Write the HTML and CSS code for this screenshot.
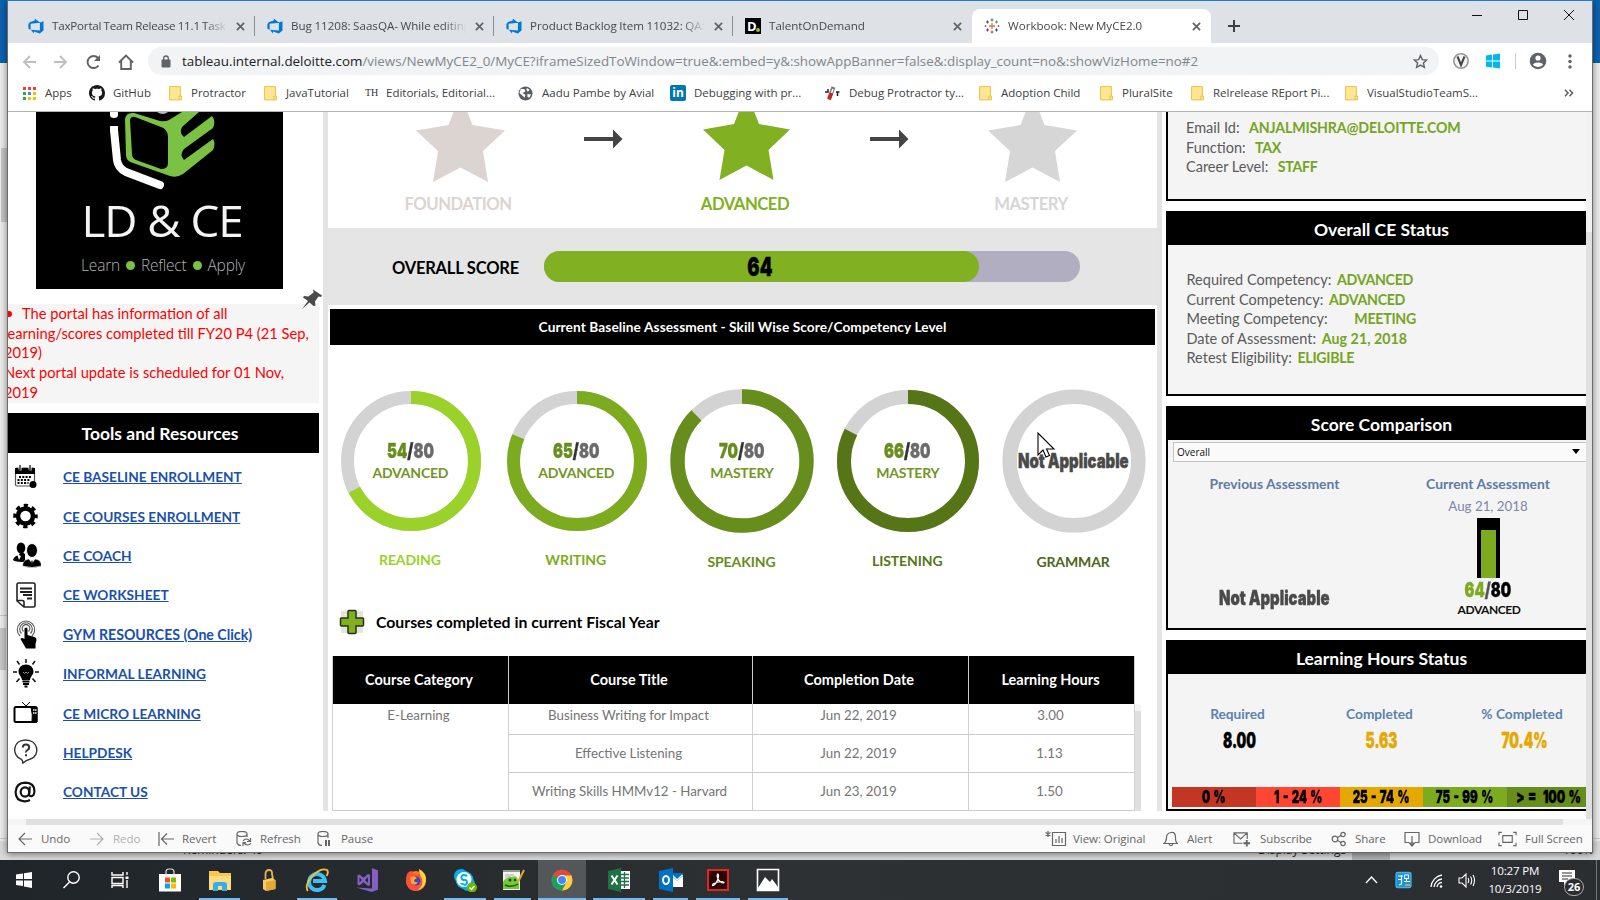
FILE: index.html
```html
<!DOCTYPE html>
<html lang="en">
<head>
<meta charset="utf-8">
<title>Workbook: New MyCE2.0</title>
<link rel="stylesheet" href="styles.css">
</head>
<body>
<svg class="defs" width="0" height="0">
  <defs>
    <symbol id="azure" viewBox="0 0 16 16"><path fill="#0078d7" d="M15.5 3.2v9.4L11.8 15.6 6 13.6v2L2.8 11.8l9.1.7V4.600z M12 4.700 6.800.5v2.100L2 4 .4 6v4.700l2.200 1V5.700z"/></symbol>
    <symbol id="x" viewBox="0 0 10 10"><path d="M1 1l8 8M9 1L1 9" stroke="#5f6368" stroke-width="1.900" fill="none"/></symbol>
    <symbol id="folder" viewBox="0 0 13 15"><path d="M.6.6h10.800v9.500h1v3.800H.6z" fill="#ffe694" stroke="#e9c33f"/><path d="M10 13.900v-3.800h1.400" fill="none" stroke="#e9c33f"/></symbol>
  </defs>
</svg>

<div class="desktop">
  <div class="desk-blue"></div>
  <div class="desk-thumb upper"></div>
  <div class="desk-thumb lower"></div>
  <div class="desk-line short"></div>
  <div class="desk-line long"></div>
  <div class="desk-status"><span class="s1">Reminders: 49</span><span class="s3">Display Settings</span><i></i><span class="s4">100%</span></div>
</div>

<div class="window">
  <div class="tabs">
    <div class="tab"><svg class="fav"><use href="#azure"/></svg><span class="tt">TaxPortal Team Release 11.1 Taskboard</span><svg class="cl"><use href="#x"/></svg></div>
    <div class="tab"><svg class="fav"><use href="#azure"/></svg><span class="tt">Bug 11208: SaasQA- While editing</span><svg class="cl"><use href="#x"/></svg></div>
    <div class="tab"><svg class="fav"><use href="#azure"/></svg><span class="tt">Product Backlog Item 11032: QA: T</span><svg class="cl"><use href="#x"/></svg></div>
    <div class="tab nosep"><span class="fav dlogo">D<i></i></span><span class="tt">TalentOnDemand</span><svg class="cl"><use href="#x"/></svg></div>
    <div class="tab active">
      <svg class="fav" viewBox="0 0 16 16" fill="none"><path d="M8 5v6M5 8h6" stroke="#e8762c" stroke-width="1.300"/><path d="M8 .5v3M6.500 2h3M8 12.500v3M6.500 14h3" stroke="#5b6591"/><path d="M3.500 2.500v3M2 4h3M12.500 10.500v3M11 12h3" stroke="#3a4a7a"/><path d="M12.500 2.500v3M11 4h3M1.500 7v2M.5 8h2M14.500 7v2M13.500 8h2" stroke="#5b879b"/><path d="M3.500 10.500v3M2 12h3" stroke="#c72035"/></svg>
      <span class="tt">Workbook: New MyCE2.0</span><svg class="cl"><use href="#x"/></svg></div>
    <svg class="plus" viewBox="0 0 12 12"><path d="M6 0v12M0 6h12" stroke="#3c4043" stroke-width="2"/></svg>
    <svg class="winbtns" width="104" height="14" viewBox="0 0 104 14" fill="none" stroke="#111"><path d="M0 7.500h10M46.500 2.500h9v9h-9zM92 2l10 10M102 2L92 12"/></svg>
  </div>

  <div class="nav">
    <svg class="navicons" width="122" height="18" viewBox="0 0 122 18" fill="none" stroke-width="1.900">
      <path d="M14 9H2M8 3L2 9l6 6M32 9h12M38 3l6 6-6 6" stroke="#bdbfc1"/>
      <path d="M76.500 12.500A6 6 0 1 1 76 5" stroke="#5f6368"/><path d="M78 2v6h-6z" fill="#5f6368"/>
      <path d="M97 9.500l7-7 7 7M99.200 8v8h9.600V8" stroke="#5f6368"/>
    </svg>
    <div class="omni">
      <svg width="10" height="13" viewBox="0 0 10 13"><rect y="4.500" x=".5" width="9" height="8" rx="1" fill="#5f6368"/><path d="M2.700 5V3.300a2.300 2.300 0 0 1 4.600 0V5" fill="none" stroke="#5f6368" stroke-width="1.300"/></svg>
      <span class="url"><b>tableau.internal.deloitte.com</b>/views/NewMyCE2_0/MyCE?iframeSizedToWindow=true&amp;:embed=y&amp;:showAppBanner=false&amp;:display_count=no&amp;:showVizHome=no#2</span>
      <svg class="star" width="15" height="15" viewBox="0 0 15 15"><path d="M7.500 1.500l1.800 4.100 4.400.4-3.300 3 1 4.400-3.900-2.300-3.900 2.300 1-4.400-3.300-3 4.400-.4z" fill="none" stroke="#5f6368" stroke-width="1.400"/></svg>
    </div>
    <svg class="exts" width="130" height="20" viewBox="0 0 130 20">
      <circle cx="9" cy="10" r="7.200" fill="#f4f4f4" stroke="#999" stroke-width="1.600"/><path d="M5.500 5.500L9 14l3.500-8.500" fill="none" stroke="#444" stroke-width="2"/>
      <path d="M34 4.500l6-.9v6h-6zM41 3.500l7-1v7.100h-7zM34 10.600h6v6l-6-.9zM41 10.600h7v7l-7-1z" fill="#00b7f0"/>
      <path d="M63.500 2v16" stroke="#ccc"/>
      <circle cx="86" cy="10" r="8.300" fill="#5f6368"/><circle cx="86" cy="7" r="2.600" fill="#fff"/><path d="M81 13.800c1-3 9-3 10 0-2 2.800-8 2.800-10 0z" fill="#fff"/>
      <g fill="#5f6368"><circle cx="118" cy="5" r="1.700"/><circle cx="118" cy="10.500" r="1.700"/><circle cx="118" cy="16" r="1.700"/></g>
    </svg>
  </div>

  <div class="marks">
    <div><svg viewBox="0 0 13 13" width="13" height="13"><path fill="#ea4335" d="M0 0h3v3H0zM5 0h3v3H5zM10 0h3v3h-3z"/><path fill="#34a853" d="M0 5h3v3H0zM0 10h3v3H0z"/><path fill="#4285f4" d="M5 5h3v3H5z"/><path fill="#fbbc05" d="M10 5h3v3h-3zM5 10h3v3H5zM10 10h3v3h-3z"/></svg><span>Apps</span></div>
    <div class="gh"><svg viewBox="0 0 16 16" width="16" height="16"><path fill="#15181c" d="M8 0C3.580 0 0 3.580 0 8c0 3.540 2.290 6.530 5.470 7.590.4.070.55-.17.550-.38 0-.19-.01-.82-.01-1.490-2.010.37-2.530-.49-2.690-.94-.09-.23-.48-.94-.82-1.130-.28-.15-.68-.52-.01-.53.630-.01 1.080.58 1.230.82.720 1.210 1.870.87 2.330.66.070-.52.280-.87.510-1.070-1.780-.2-3.640-.89-3.640-3.950 0-.87.310-1.590.82-2.150-.08-.2-.36-1.020.08-2.120 0 0 .67-.21 2.200.82.640-.18 1.320-.27 2-.27s1.360.09 2 .27c1.530-1.040 2.200-.82 2.200-.82.440 1.100.160 1.920.08 2.120.510.560.820 1.270.820 2.150 0 3.070-1.870 3.750-3.650 3.950.290.250.540.730.540 1.480 0 1.070-.01 1.930-.01 2.200 0 .21.150.46.550.38A8 8 0 0 0 16 8c0-4.420-3.580-8-8-8"/></svg><span>GitHub</span></div>
    <div><svg width="13" height="15"><use href="#folder"/></svg><span>Protractor</span></div>
    <div><svg width="13" height="15"><use href="#folder"/></svg><span>JavaTutorial</span></div>
    <div><em>TH</em><span>Editorials, Editorial...</span></div>
    <div><svg viewBox="0 0 16 16" width="15" height="15"><circle cx="8" cy="8" r="7.500" fill="#5a5d61"/><path d="M3 3l4 .5 1 2-3 2 3 2-1 3-3-3-2.500-2zM9.500 2l3 2-2 2-1.500-2zM10 8.500l4 .5-2 3.500-2-1z" fill="#fff"/></svg><span>Aadu Pambe by Avial</span></div>
    <div><b class="in">in</b><span>Debugging with pr...</span></div>
    <div><svg viewBox="0 0 16 16" width="16" height="16" fill="none"><path d="M9.500 2L5 14" stroke="#777" stroke-width="4"/><path d="M9 4L5.500 13" stroke="#fff" stroke-width="1.500"/><path d="M7.500 8L5 14.500" stroke="#c22" stroke-width="3.500"/><path d="M1 7h3V4M12 7h3.500M13.500 7v4" stroke="#222" stroke-width="1.500"/></svg><span>Debug Protractor ty...</span></div>
    <div><svg width="13" height="15"><use href="#folder"/></svg><span>Adoption Child</span></div>
    <div><svg width="13" height="15"><use href="#folder"/></svg><span>PluralSite</span></div>
    <div><svg width="13" height="15"><use href="#folder"/></svg><span>Relrelease REport Pi...</span></div>
    <div><svg width="13" height="15"><use href="#folder"/></svg><span>VisualStudioTeamS...</span></div>
    <div><svg viewBox="0 0 10 8" width="10" height="8"><path d="M1 .8L4 4 1 7.200M5.500.8L8.500 4l-3 3.200" fill="none" stroke="#5f6368" stroke-width="1.600"/></svg></div>
  </div>

  <div class="page">
    <aside class="left">
      <div class="logo">
        <svg width="247" height="90" viewBox="0 0 247 90">
          <path d="M78 18l3 30q1 8 9 12l34 13" fill="none" stroke="#fff" stroke-width="8" stroke-linecap="round"/>
          <path d="M72 6h12v8H72z"/><path d="M74 14h8v5h-8z" fill="#fff"/><path d="M74 0h8v3q0 3-4 3t-4-3z" fill="#fff"/><path d="M121 0h11q-5 4-11 0z" fill="#bbb"/>
          <path fill="#7bc143" d="M89 7q1-7 9-6l26 8q5 1 9-1l13-8h17L146 15q-3 6 2 10l28-21q4 5 1 12l-29 21q-5 6 0 11l29-21q3 5 0 11l-30 24q-6 4-13 2L97 51q-7-2-7-8z"/>
          <path d="M94 8q1-4 5-3l26 10q6 2 7 9v27q0 6-7 6l-25-9q-4-2-4-6z"/>
        </svg>
        <div class="name">LD &amp; CE</div>
        <div class="motto"><span>Learn</span><i></i><span>Reflect</span><i></i><span>Apply</span></div>
      </div>
      <div class="notice">
        <p class="ind"><i></i>The portal has information of all</p><p>learning/scores completed till FY20 P4 (21 Sep,</p><p>2019)</p><p>Next portal update is scheduled for 01 Nov,</p><p>2019</p>
        <svg class="pin" width="22" height="22" viewBox="0 0 22 22"><path d="M12 1.500l9 6-1 1.500-2.500-.5-3.500 5 .5 4-2 .5-4-3.500L1 21l6-8-5-3.500 1-1.500 4.500.5 5-4z" fill="#4a4a4a"/></svg>
      </div>
      <h2 class="bar">Tools and Resources</h2>
      <ul class="links">
        <li><svg viewBox="0 0 26 26"><rect x="2.500" y="4" width="19" height="18" rx="1.500" fill="#fff" stroke="#555" stroke-width="1.200"/><path d="M2 4h20v6H2z"/><path d="M7 1.500v5M17 1.500v5" stroke="#fff" stroke-width="3"/><path d="M7 1v5H5M17 1v5h-2" fill="none" stroke="#000" stroke-width="1.200"/><path d="M6 13h12M4.500 16h13M4.500 19h11" stroke="#000" stroke-width="2" stroke-dasharray="2 1.300"/><circle cx="20" cy="20.500" r="3.500"/></svg><a>CE BASELINE ENROLLMENT</a></li>
        <li><svg viewBox="0 0 26 26"><circle cx="12.500" cy="13" r="7.500" fill="none" stroke="#000" stroke-width="4.500"/><circle cx="12.500" cy="13" r="10.500" fill="none" stroke="#000" stroke-width="3.500" stroke-dasharray="4.250 4" stroke-dashoffset="2.100"/></svg><a>CE COURSES ENROLLMENT</a></li>
        <li><svg class="coach" viewBox="0 0 28 26"><ellipse cx="8" cy="6" rx="4.300" ry="5.500"/><path d="M0 18q1-4 6-5l2-4 4 3v8q-10 0-12-2z"/><path d="M8 14l-4-2 2 6z" fill="#fff"/><ellipse cx="19" cy="8.500" rx="5.500" ry="7" stroke="#fff" stroke-width="1"/><path d="M9.500 24q0-6 6-7l3.500 3 3.500-3q6 1 6 7-9.500 3-19 0z" stroke="#fff" stroke-width=".6"/><path d="M17 18l2 5 2-5z" fill="#fff"/><path d="M18.500 18.500h1l.5 4h-2z"/></svg><a>CE COACH</a></li>
        <li><svg viewBox="0 0 26 26" fill="none" stroke="#222" stroke-width="1.600"><path d="M4 19V2.500Q4 1 5.500 1h15Q22 1 22 2.500v21Q22 25 20.500 25H11zM4 18.500h5.500Q11 18.500 11 20v5"/><path d="M7 6.500h12M7 10h12M10 13h9M14 16.500h5" stroke-width="2"/></svg><a>CE WORKSHEET</a></li>
        <li><svg class="tall" viewBox="0 0 26 30"><g fill="none" stroke="#555" stroke-width="1.100"><path d="M7 17a8.700 8.700 0 1 1 12 0M8.500 14.500a6.300 6.300 0 1 1 9 0M10.500 12.500a3.900 3.900 0 1 1 5 0"/></g><path d="M11.500 9.500q1.500-2 3 0V16l7 2q2 .5 2 3l-1 4v4.500H13L7.500 20q1-2 4 0z"/></svg><a class="gy">GYM RESOURCES (One Click)</a></li>
        <li><svg class="tall" viewBox="0 0 26 30"><path d="M13 5.500c4.500 0 7.500 3.300 7.500 7 0 3.500-3 4.500-3.500 8.500H9c-.5-4-3.500-5-3.500-8.500 0-3.700 3-7 7.500-7z"/><path d="M9.500 22.500h7M10 25h6M11.500 27.500h3" stroke="#000" stroke-width="1.800"/><path d="M13 0v4M4 2l2.500 3.500M22 2l-2.500 3.500M0 13h4M22 13h4M3.500 23l3-3.500M22.500 23l-3-3.500" stroke="#111" stroke-width="1.500"/><path d="M10 13q1.500 3 3 0 1.500 3 3 0" fill="none" stroke="#999"/></svg><a>INFORMAL LEARNING</a></li>
        <li><svg viewBox="0 0 26 26"><rect x="1.500" y="7" width="22" height="15" rx="1.500" fill="#fff" stroke="#000" stroke-width="2"/><path d="M18 7h6v15h-5q1-7-1-15zM13 6L9 2M13 6l4-4" stroke="#000"/><path d="M20 10h1.500M22 10h1.500M20 13h1.500M22 13h1.500" stroke="#fff" stroke-width="1.500"/></svg><a>CE MICRO LEARNING</a></li>
        <li><svg viewBox="0 0 26 26" fill="none" stroke="#333" stroke-width="1.400"><path d="M8 20C-2 16 0 1 12.500 1S28 16 17.500 20Q13 21 9.500 24.500 10.500 22 8 20z"/><path d="M9.800 8.500q0-3 3.200-3t3.200 3q0 1.500-1.700 2.500t-1.500 2.500M13 15.200v2" stroke-width="2"/></svg><a>HELPDESK</a></li>
        <li><svg viewBox="0 0 26 26" fill="none" stroke="#111" stroke-width="2.200"><ellipse cx="12" cy="13" rx="4.300" ry="4.600"/><path d="M16.800 7.500l-.7 7.500q0 2.500 2.300 2.200 3-.6 3-5.200 0-8-9-8.300Q3 4 2.600 13q0 9 9 9.300 3 0 5.400-1.300"/></svg><a>CONTACT US</a></li>
      </ul>
    </aside>
    <div class="gutter"></div>

    <main class="center">
      <section class="levels">
        <svg width="829" height="80" viewBox="0 0 829 80">
          <path fill="#dcd4d0" d="M132.500-18L144.500 13 177 18.500 155 39l5 31-27.500-14.500L105 70l5-31L88 18.500 120.500 13z"/>
          <path fill="#81b123" d="M418.500-20L431 12l31 5.500L440.500 38l5 30-27-14.500L391.500 68l5-30L375 17.500 406 12z"/>
          <path fill="#d6d6d6" d="M704.500-18L716.500 13 749 18.500 727 39l5 31-27.500-14.500L677 70l5-31L660 18.500 692.500 13z"/>
          <path fill="#444" d="M256 25h29v-7.500l9.500 9.500-9.500 9.500V29h-29zM542 25h29v-7.500l9.500 9.500-9.500 9.500V29h-29z"/>
        </svg>
        <div class="lvl"><span class="c1">FOUNDATION</span><span class="c2">ADVANCED</span><span class="c3">MASTERY</span></div>
      </section>
      <section class="overall">
        <span class="lab">OVERALL SCORE</span>
        <div class="track"><div class="fill" style="width:435px"><span class="imp n64">64</span></div></div>
      </section>
      <h3 class="cap">Current Baseline Assessment - Skill Wise Score/Competency Level</h3>
      <section class="donuts">
        <div class="dn"><svg viewBox="-72 -72 144 144"><circle r="63.500" stroke="#d3d3d3" stroke-width="13"/><circle r="63.500" stroke="#9ad229" stroke-width="13" pathLength="100" stroke-dasharray="67.500 100"/></svg><div class="in1"><span class="imp sc"><b>54</b><u>/</u>80</span><span class="lv">ADVANCED</span></div><span class="nm" style="color:#9ad229">READING</span></div>
        <div class="dn"><svg viewBox="-72 -72 144 144"><circle r="63.500" stroke="#d3d3d3" stroke-width="13"/><circle r="63.500" stroke="#7dab20" stroke-width="13" pathLength="100" stroke-dasharray="81.250 100"/></svg><div class="in1"><span class="imp sc"><b>65</b><u>/</u>80</span><span class="lv">ADVANCED</span></div><span class="nm" style="color:#7dab20">WRITING</span></div>
        <div class="dn"><svg viewBox="-72 -72 144 144"><circle r="64.500" stroke="#d3d3d3" stroke-width="14.300"/><circle r="64.500" stroke="#678d1c" stroke-width="14.300" pathLength="100" stroke-dasharray="87.500 100"/></svg><div class="in1"><span class="imp sc"><b>70</b><u>/</u>80</span><span class="lv">MASTERY</span></div><span class="nm low" style="color:#678d1c">SPEAKING</span></div>
        <div class="dn"><svg viewBox="-72 -72 144 144"><circle r="64" stroke="#d3d3d3" stroke-width="14"/><circle r="64" stroke="#567516" stroke-width="14" pathLength="100" stroke-dasharray="82.500 100"/></svg><div class="in1"><span class="imp sc"><b>66</b><u>/</u>80</span><span class="lv">MASTERY</span></div><span class="nm mid" style="color:#567516">LISTENING</span></div>
        <div class="dn"><svg viewBox="-72 -72 144 144"><circle r="64.300" stroke="#d3d3d3" stroke-width="14.600"/></svg><div class="in1"><span class="imp na">Not Applicable</span></div><span class="nm low" style="color:#4d681b">GRAMMAR</span>
          <svg class="cursor" width="20" height="28" viewBox="0 0 20 28"><path d="M1 1v22l5-5 3 7 3.500-1.500-3-6.500H17z" fill="#fff" stroke="#000" stroke-width="1.100"/></svg></div>
      </section>
      <div class="courses"><svg width="26" height="26" viewBox="0 0 26 26"><rect x="2" y="2" width="22" height="22" fill="#e2e6da"/><path d="M10 1.500h6Q17 1.500 17 2.500V9h6.500q1 0 1 1v6q0 1-1 1H17v6.500q0 1-1 1h-6q-1 0-1-1V17H2.500q-1 0-1-1v-6q0-1 1-1H9V2.500q0-1 1-1z" fill="#7fb01f" stroke="#26301a" stroke-width="1.500"/></svg><span>Courses completed in current Fiscal Year</span></div>
      <div class="tblwrap">
        <div class="tbl">
          <div class="th">Course Category</div><div class="th">Course Title</div><div class="th">Completion Date</div><div class="th">Learning Hours</div>
          <div class="td cat">E-Learning</div><div class="td">Business Writing for Impact</div><div class="td">Jun 22, 2019</div><div class="td">3.00</div>
          <div class="td">Effective Listening</div><div class="td">Jun 22, 2019</div><div class="td">1.13</div>
          <div class="td">Writing Skills HMMv12 - Harvard</div><div class="td">Jun 23, 2019</div><div class="td">1.50</div>
        </div>
        <div class="tsb"></div>
      </div>
    </main>
    <div class="gutter"></div>

    <aside class="right">
      <section class="panel p1"><p>Email Id:&nbsp; <b class="em">ANJALMISHRA@DELOITTE.COM</b></p><p>Function:&nbsp; <b>TAX</b></p><p>Career Level:&nbsp; <b>STAFF</b></p></section>
      <section class="panel p2"><h2>Overall CE Status</h2><div class="rows"><p>Required Competency: <b>ADVANCED</b></p><p>Current Competency: <b>ADVANCED</b></p><p>Meeting Competency: <b class="meet">MEETING</b></p><p>Date of Assessment: <b class="mixed">Aug 21, 2018</b></p><p>Retest Eligibility: <b>ELIGIBLE</b></p></div></section>
      <section class="panel p3"><h2>Score Comparison</h2>
        <div class="select"><span>Overall</span><i></i></div>
        <div class="cmp">
          <div class="prev"><span class="ah">Previous Assessment</span><span class="imp na2">Not Applicable</span></div>
          <div class="cur"><span class="ah">Current Assessment</span><span class="dt">Aug 21, 2018</span><div class="vbar"><i style="height:48px"></i></div><span class="imp sc2"><b>64</b><u>/</u>80</span><span class="adv">ADVANCED</span></div>
        </div>
      </section>
      <section class="panel p4"><h2>Learning Hours Status</h2>
        <div class="hrs"><div><span>Required</span><span class="imp hn blk">8.00</span></div><div><span>Completed</span><span class="imp hn">5.63</span></div><div><span>% Completed</span><span class="imp hn">70.4%</span></div></div>
        <div class="legend"><span><b class="imp">0 %</b></span><span><b class="imp">1 - 24 %</b></span><span><b class="imp">25 - 74 %</b></span><span><b class="imp">75 - 99 %</b></span><span><b class="imp">&gt; =&nbsp; 100 %</b></span></div>
      </section>
    </aside>
    <div class="vscroll"></div>
  </div>
  <div class="hscroll"><div></div></div>

  <div class="tbar">
    <div><svg viewBox="0 0 16 16"><path d="M15 8H2M8 2L2 8l6 6"/></svg><span>Undo</span></div>
    <div class="dim"><svg viewBox="0 0 16 16"><path d="M1 8h13M8 2l6 6-6 6"/></svg><span>Redo</span></div>
    <div><svg viewBox="0 0 16 16"><path d="M1 1v14M16 8H3M9 2.500L3.500 8 9 13.500"/></svg><span>Revert</span></div>
    <div><svg viewBox="0 0 16 16"><path d="M1 3v9q1 2.500 4 2.500M11 3v3M1 3q0-2.500 5-2.500T11 3 6 5.500 1 3M7 10q3-4 7 0M14.500 7v3.500H11M15 12q-3 4-7 0M7 15v-3.500h3"/></svg><span>Refresh</span></div>
    <div><svg viewBox="0 0 16 16"><path d="M1 3v9q1 2.500 4 2.500M11 3v4M1 3q0-2.500 5-2.500T11 3 6 5.500 1 3"/><path d="M9 9v6M12 9v6" stroke-width="2"/></svg><span>Pause</span></div>
    <div><svg class="wide22" viewBox="0 0 22 16"><path d="M7.500 1.500h13v13h-13zM11 12V8M14 12V5M17 12V7"/><path d="M3 0v6M.5 1.500l5 3M5.500 1.500l-5 3"/></svg><span>View: Original</span></div>
    <div><svg viewBox="0 0 16 16"><path d="M1 12.500q2.500-2 2.500-6T8 1.500 12.500 6.500 15 12.500zM6 13q2 3.500 4 0"/></svg><span>Alert</span></div>
    <div><svg class="wide20" viewBox="0 0 20 16"><path d="M10 12.500H1V1.500h14V8M1 1.500l7 6.500 7-6.500"/><path d="M14.500 9v7M11 12.500h7" stroke-width="2"/></svg><span>Subscribe</span></div>
    <div><svg viewBox="0 0 16 16"><circle cx="4" cy="8" r="2.800"/><circle cx="12" cy="3.500" r="2.200"/><circle cx="12" cy="12.500" r="2.200"/><path d="M6.500 6.500l3.500-2M6.500 9.500l3.500 2"/></svg><span>Share</span></div>
    <div><svg viewBox="0 0 16 16"><path d="M5 11.500H1V1.500h14v10h-4M8 5v9M5.500 12L8 15l2.500-3z"/></svg><span>Download</span></div>
    <div><svg class="wide20" viewBox="0 0 20 16"><path d="M1 4V1h3M16 1h3v3M19 12v3h-3M4 15H1v-3M5 4.500h10v7H5z"/></svg><span>Full Screen</span></div>
  </div>
</div>

<div class="taskbar">
  <div><svg viewBox="0 0 24 24"><path d="M4 6.500l7-1V11H4zM12 5.300l8-1.300v7h-8zM4 12.500h7V18l-7-1zM12 12.500h8V20l-8-1.400z" fill="#fff"/></svg></div>
  <div><svg viewBox="0 0 24 24" fill="none" stroke="#fff" stroke-width="1.400"><circle cx="14.500" cy="9.500" r="5.700"/><path d="M10.500 14l-6 6"/></svg></div>
  <div><svg viewBox="0 0 24 24" fill="none" stroke="#fff" stroke-width="1.400"><path d="M4 4v3h11V4M4 9.500h11v6H4zM4 20v-2.500h11V20M19 4v3M19 12v8"/><path d="M17.500 8.500h3v2.500h-3z" fill="#fff" stroke="none"/></svg></div>
  <div><svg viewBox="0 0 24 24"><path d="M1 6h22v17q0 .5-1 .5H2q-1 0-1-.500z" fill="#fff"/><path d="M8 9V4q0-3 3-3h2q3 0 3 3v5" fill="none" stroke="#ddd" stroke-width="1.200"/><path fill="#f25022" d="M7 9.500h5v5H7z"/><path fill="#7fba00" d="M13 9.500h5v5h-5z"/><path fill="#00a4ef" d="M7 15.500h5v5H7z"/><path fill="#ffb900" d="M13 15.500h5v5h-5z"/></svg></div>
  <div class="on"><svg viewBox="0 0 24 24"><path d="M1 3h9l2 2h11v16H1z" fill="#f7c84b"/><path d="M1 8h22v14H1z" fill="#fddc83"/><path d="M5 23v-6q0-3 3-3h8q3 0 3 3v6h-5v-5h-4v5z" fill="#36aee8"/></svg></div>
  <div><svg viewBox="0 0 24 24"><path d="M8.500 11V6q0-4 3.500-4t3 4l1 5" fill="none" stroke="#e8b64a" stroke-width="1.800"/><path d="M6 12l9-2 3.500 2v9L9 23l-3-2z" fill="#f7cb63"/><path d="M9 14v9l9.500-2v-9z" fill="#e3a835"/></svg></div>
  <div class="on"><svg viewBox="0 0 24 24"><path d="M19.500 17a8 8 0 1 1 .5-4H8" fill="none" stroke="#3fc0f2" stroke-width="4"/><path d="M3 23C-3 16 13-2 22 2q2 2-.5 6" fill="none" stroke="#f3c13a" stroke-width="1.800"/></svg></div>
  <div><svg viewBox="0 0 24 24"><path d="M17 0l6 2.500v19L17 24 1 19.500l16 1z" fill="#865fc5"/><path d="M2.500 7.500l2-1 4 3.300L13 6l2 .8v10.400l-2 .8-4.500-3.800-4 3.300-2-1zM4.500 9.500v5l2.300-2.500zM13 9l-3 3 3 3z" fill="#865fc5" fill-rule="evenodd"/></svg></div>
  <div><svg viewBox="0 0 24 24"><circle cx="12" cy="13" r="10" fill="#ff7a1a"/><path d="M2 12Q2 3 8 3q1 4 6 4 2-4 1-6 7 4 7 12-3 10-11 10T2 12z" fill="#ff4f3a"/><path d="M15 1q8 4 7 12-2 8-8 9 6-5 4-11-3-5-3-10z" fill="#ffd43b"/><circle cx="12" cy="13" r="4.500" fill="#3b48b8"/><path d="M6 9q4-2 7 1l-3 2q0 3 4 2-3 5-7 1z" fill="#ffa436"/></svg></div>
  <div class="on"><svg viewBox="0 0 24 24"><circle cx="8" cy="8" r="7" fill="#00aff0"/><circle cx="15" cy="16" r="7" fill="#00aff0"/><circle cx="11.500" cy="12" r="9" fill="#00aff0"/><circle cx="11" cy="11.500" r="7.500" fill="#fff"/><path d="M14 8.500q-1-2-3.500-1.500T8.500 10t3 2 2.500 2.500T11 16.500 8 15" fill="none" stroke="#00aff0" stroke-width="2"/><circle cx="19" cy="19.500" r="5" fill="#6bb700"/><path d="M16.500 19.500l2 2 3-3.500" fill="none" stroke="#fff" stroke-width="1.500"/></svg></div>
  <div class="on"><svg viewBox="0 0 24 24"><path d="M2 3h17v19H2z" fill="#f1f5ec"/><path d="M2 2h17v2H2z" fill="#999"/><path d="M4 7h9M4 9h6" stroke="#aaa"/><path d="M2 21v-7q2-4 5-4 1-2 4-1 4-2 5 1 3 4 2 11z" fill="#74c931"/><circle cx="9" cy="12" r="1.500" fill="#174a0c"/><circle cx="14" cy="12" r="1.300" fill="#174a0c"/><path d="M4 17q7 3 13-1" stroke="#22550f" stroke-width="1.500" fill="none"/><path d="M17 14l6-12" stroke="#e7a72c" stroke-width="2"/></svg></div>
  <div class="on act"><svg viewBox="0 0 24 24"><circle cx="12" cy="12" r="10.500" fill="#dd4b3e"/><path d="M2.800 7Q-1 16 6 20.700q3 2 6 1.800l5-8-5-2.500z" fill="#1da05d"/><path d="M12 22.500q7 0 10-7 1-4-.5-8H12l5 6z" fill="#fecf43"/><circle cx="12" cy="12" r="5" fill="#fff"/><circle cx="12" cy="12" r="4" fill="#4688f2"/></svg></div>
  <div class="on"><svg viewBox="0 0 24 24"><path d="M12 3h11v18H12z" fill="#fff"/><path d="M13 6.500h9M13 10h9M13 13.500h9M13 17h9M17.500 4v16" stroke="#207245" stroke-width="1.300"/><path d="M1 3l13-3v24L1 21z" fill="#207245"/><path d="M4.500 7.500l6 9M10.500 7.500l-6 9" stroke="#fff" stroke-width="2"/></svg></div>
  <div class="on"><svg viewBox="0 0 24 24"><path d="M12 5h12v14H12z" fill="#fff"/><path d="M12 5h12v3l-6 5-6-5z" fill="#0072c6"/><path d="M13 7l5 5 5.500-5" fill="none" stroke="#fff" stroke-width="1.500"/><path d="M0 3l14-3v24L0 21z" fill="#0072c6"/><ellipse cx="7" cy="12" rx="3" ry="4" fill="none" stroke="#fff" stroke-width="2"/></svg></div>
  <div class="on"><svg viewBox="0 0 24 24"><path d="M2 2h20v20H2z" fill="#2b0504" stroke="#e1251b" stroke-width="2"/><path d="M11.500 6q1.500 0 .8 3.500Q11 15 7.500 17.500q-2 .5-.5-1.500 3-2 9-2.500 3 .8 1.500 1.500-3 .3-6-5-.8-2.500 0-4z" fill="none" stroke="#fff" stroke-width="1.200"/></svg></div>
  <div class="on"><svg viewBox="0 0 24 24"><path d="M1.500 1.500h21v21h-21z" fill="none" stroke="#fff" stroke-width="1.600"/><path d="M2 20l7-11 5 5 2-3 6 8v4H2z" fill="#fff"/></svg></div>
  <div class="tray">
    <svg width="110" height="24" viewBox="0 0 110 24" fill="none" stroke="#fff" stroke-width="1.300">
      <path d="M1 15l5.500-6 5.500 6"/>
      <rect x="31" y="4.500" width="15" height="15" rx="2" fill="#1793d6" stroke="#4aaee8"/><path d="M33 8h5M33 11.500h4M36.500 7v9l-2.500 1M39.500 7h4v3.500h-4zM41.500 10.500v3M39 13.500h6" stroke-width="1.100"/><path d="M40 17h5" stroke="#f3b21c" stroke-width="1.500"/>
      <path d="M66 19a13 13 0 0 1 11-12M69 19a9 9 0 0 1 8-8M72 19a5 5 0 0 1 5-4.500"/><circle cx="76" cy="18.500" r="1.300" fill="#fff" stroke="none"/>
      <path d="M94 10h3l4-4v13l-4-4h-3zM103 10q1.500 2.500 0 5M105.500 8.500q2.500 4 0 8M108 7q3 5 0 11" stroke-width="1.100"/>
    </svg>
    <div class="clock"><span>10:27 PM</span><span>10/3/2019</span></div>
    <div class="note"><svg width="16" height="16" viewBox="0 0 16 16"><path d="M0 0h16v12h-7l-4 4v-4H0z" fill="#fff"/><path d="M3 3h10M3 6h10M3 9h6" stroke="#2a2d30" stroke-width="1.200"/></svg><b>26</b></div>
    <i class="peek"></i>
  </div>
</div>
</body>
</html>
```

FILE: styles.css
```css
* { box-sizing: border-box; }
body { margin: 0; width: 1600px; height: 900px; overflow: hidden; position: relative; font-family: Lato, "Liberation Sans", sans-serif; color: #000; }
h2, h3, p, ul { margin: 0; padding: 0; }
i, em { font-style: normal; }
u { text-decoration: none; }
.defs { position: absolute; }

/* desktop behind the browser */
.desktop { position: absolute; inset: 0; background: #ececec; }
.desk-blue { height: 63px; background: #0d63b0; }
.desk-thumb { position: absolute; left: 1px; width: 6px; background: #c6c6c6; }
.desk-thumb.upper { top: 148px; height: 74px; }
.desk-thumb.lower { top: 628px; height: 42px; left: 0; }
.desk-line { position: absolute; left: 0; right: 0; height: 1px; background: #c4c4c4; }
.desk-line.short { top: 615px; width: 8px; }
.desk-line.long { top: 838px; }
.desk-status { position: absolute; top: 841px; left: 0; right: 0; height: 19px; overflow: hidden; background: #dadada; font: 12px/14px "Open Sans", sans-serif; color: #222; }
.desk-status span { position: absolute; top: 2px; }
.desk-status i { position: absolute; left: 1352px; width: 38px; height: 19px; background: #b0b0b0; }
.s1 { left: 183px; } .s3 { left: 1258px; } .s4 { left: 1563px; }

/* browser window */
.window { position: absolute; left: 7px; top: 0; width: 1586px; height: 853px; border: 1px solid #6b6b6b; border-top: 1px solid #1a7fd4; background: #fff; display: flex; flex-direction: column; box-shadow: 0 1px 7px rgba(0,0,0,.5); }
.tabs { height: 42px; background: #dee1e6; display: flex; font: 11.600px/16px "Open Sans", sans-serif; color: #45484c; padding: 8px 0 0 8px; word-spacing: -.5px; }
.tab { width: 239px; height: 34px; padding: 0 10px 0 12px; display: flex; align-items: center; position: relative; }
.tab::after { content: ""; position: absolute; right: 0; top: 7px; height: 20px; width: 1px; background: #8a8d91; }
.tab.nosep::after, .tab.active::after { display: none; }
.tab.active { background: #fff; border-radius: 8px 8px 0 0; }
.fav { width: 16px; height: 16px; flex: none; margin-right: 8px; }
.tt { width: 177px; overflow: hidden; white-space: nowrap; -webkit-mask-image: linear-gradient(90deg, #000 86%, transparent 99%); mask-image: linear-gradient(90deg, #000 86%, transparent 99%); }
.cl { width: 9px; height: 9px; margin-left: 7px; flex: none; }
.tab:first-child .tt { letter-spacing: -.2px; }
.dlogo { background: #000; color: #fff; font: bold 13px/16px "Open Sans", sans-serif; padding-left: 2px; position: relative; }
.dlogo i { position: absolute; right: 1px; bottom: 2px; width: 4px; height: 4px; border-radius: 50%; background: #86bc25; }
.plus { width: 12px; height: 12px; margin: 11px 0 0 17px; }
.winbtns { margin: -1px 0 0 232px; }
.nav { height: 36px; display: flex; align-items: center; }
.navicons { margin-left: 14px; margin-top: 1px; }
.omni { margin-left: 4px; width: 1291px; height: 28px; border-radius: 14px; background: #f1f3f4; display: flex; align-items: center; padding: 0 11px 0 13px; }
.url { margin-left: 11px; font: 13.400px/20px "Open Sans", sans-serif; color: #80868b; white-space: nowrap; }
.url b { font-weight: 400; color: #202124; }
.star { margin-left: auto; }
.exts { margin-left: 13px; }
.marks { height: 33px; padding: 0 0 4px 15px; border-bottom: 1px solid #b2b2b2; display: grid; grid-template-columns: 66px 80px 95px 100px 154px 152px 154px 155px 121px 91px 154px 219px 20px; font: 11.500px/16px "Open Sans", sans-serif; color: #3c4043; }
.marks div { display: flex; align-items: center; white-space: nowrap; }
.marks svg { flex: none; margin-right: 9px; }
.marks .gh svg { margin-right: 8px; }
.marks em { font: 10px/14px "Liberation Serif", serif; width: 16px; margin: 0 5px 0 1px; color: #333; }
.in { width: 16px; height: 16px; background: #0077b5; color: #fff; border-radius: 2px; font: bold 12px/15px "Open Sans", sans-serif; text-align: center; margin-right: 8px; }

/* dashboard */
.page { height: 707px; display: flex; background: #fff; }
.gutter { width: 5px; height: 699px; background: #e4e4e4; }
.vscroll { width: 6px; background: linear-gradient(#f2f2f2 120px, #e0e0e0 120px); }
.left { width: 315px; padding-right: 4px; }
.logo { width: 247px; height: 177px; margin-left: 28px; background: #000; color: #f4f4f4; text-align: center; }
.logo svg { display: block; }
.logo .name { font: 400 44px/43px "Open Sans", sans-serif; height: 43px; margin-top: -3px; white-space: nowrap; transform: scaleX(1.04); letter-spacing: -1px; padding-left: 5px; }
.logo .motto { display: flex; justify-content: center; align-items: center; gap: 6px; font: 300 15.500px/24px "Open Sans", sans-serif; color: #b4b4b4; margin-top: 11px; padding-left: 7px; letter-spacing: -.2px; }
.logo .motto i { width: 9px; height: 9px; border-radius: 50%; background: #7bc143; }
.notice { margin-top: 15px; height: 99px; background: #f5f5f5; color: #f00; font-size: 14.700px; line-height: 19.700px; position: relative; white-space: nowrap; clip-path: inset(-20px -10px 0 0); }
.notice p { margin-left: -4px; }
.notice .ind { margin: 0; display: flex; align-items: center; }
.ind i { width: 6px; height: 6px; border-radius: 50%; background: #f00; margin: 0 10px 0 -2px; }
.pin { position: absolute; right: -4px; top: -16px; }
.bar { width: 311px; height: 40px; margin-top: 10px; background: #000; color: #fff; font-size: 17.500px; line-height: 41px; text-align: center; padding-right: 7px; }
.links { list-style: none; padding: 4px 0 0 5px; font-weight: bold; font-size: 13.700px; }
.links li { height: 39.400px; display: flex; align-items: center; }
.links svg { width: 26px; height: 26px; flex: none; margin-right: 24px; }
.links .coach { width: 28px; margin-right: 22px; }
.links .tall { height: 30px; }
.links a { color: #1a4fae; text-decoration: underline; white-space: nowrap; }
.links .gy { font-size: 14.150px; }

.center { width: 829px; height: 699px; overflow: hidden; }
.levels { height: 116px; }
.levels svg { display: block; height: 80px; }
.lvl { display: grid; grid-template-columns: 260px 314px 258px; text-align: center; font-weight: bold; font-size: 16.700px; line-height: 25px; letter-spacing: -.5px; }
.c1 { color: #dcd4d0; } .c2 { color: #81b123; } .c3 { color: #d6d6d6; }
.overall { height: 77px; background: #e5e5e5; display: flex; align-items: center; padding-left: 64px; }
.lab { width: 152px; font-size: 16.500px; font-weight: bold; white-space: nowrap; padding-top: 3px; letter-spacing: -.22px; }
.track { width: 536px; height: 31px; border-radius: 16px; background: #b0aec0; }
.fill { height: 31px; border-radius: 16px; background: #81b123; text-align: center; }
.imp { display: inline-block; font-family: Inter, sans-serif; font-weight: 900; white-space: nowrap; -webkit-text-stroke: .4px currentColor; }
.n64 { font-size: 26px; line-height: 31px; transform: translateX(-2px) scaleX(.7); }
.cap { width: 825px; height: 36px; margin: 4px 0 0 2px; background: #000; color: #fff; font-size: 13.700px; line-height: 36px; text-align: center; padding-right: 0; letter-spacing: .08px; }
.donuts { display: grid; grid-template-columns: repeat(5, 165.800px); padding-top: 44px; height: 244px; }
.dn { display: grid; grid-template-rows: 144px 56px; justify-items: center; position: relative; }
.dn > svg:first-child { width: 144px; height: 144px; grid-area: 1/1; fill: none; }
.dn circle { transform: rotate(-90deg); fill: none; }
.in1 { grid-area: 1/1; display: flex; flex-direction: column; align-items: center; justify-content: center; padding: 2px 1px 0 0; }
.sc { font-size: 20.500px; line-height: 22px; color: #6a6a6a; transform: scaleX(.72); }
.sc b { color: #678d1c; font-weight: 900; } .sc u { color: #333; }
.lv { font-weight: bold; font-size: 14px; letter-spacing: -.2px; line-height: 22px; color: #729626; }
.na { font-size: 20px; line-height: 24px; color: #4a4a4a; transform: translateY(-1px) scaleX(.745); }
.nm { grid-row: 2; align-self: center; font-weight: bold; font-size: 14px; letter-spacing: -.1px; margin: -3px 2px 0 0; }
.low { padding-top: 3px; }
.mid { padding-top: 1px; }
.cursor { position: absolute; left: 46px; top: 43px; }
.courses { height: 67px; display: flex; align-items: center; padding: 0 0 1px 11px; gap: 11px; font-weight: bold; font-size: 15.800px; }
.courses span { margin-top: -2px; }
.tblwrap { margin-left: 4px; display: flex; }
.tbl { width: 803px; display: grid; grid-template-columns: 176px 244px 216px 166px; grid-template-rows: 48px 31px 38px 38px; border-left: 1px solid #d2d2d2; }
.th { background: #000; color: #fff; font-weight: bold; font-size: 14.500px; text-align: center; line-height: 48px; border-right: 1px solid #ccc; padding-right: 3px; }
.td { border-right: 1px solid #d2d2d2; border-bottom: 1px solid #ccc; text-align: center; font-size: 13.300px; color: #747474; line-height: 36px; padding-right: 4px; }
.th:nth-child(4), .td:nth-child(4n) { padding-right: 2px; }
.td:nth-child(-n+8) { line-height: 22px; }
.cat { grid-row: 2 / 5; }
.tsb { width: 6px; background: linear-gradient(transparent 48px, #f3f3f3 48px, #f3f3f3 55px, #dfdfdf 55px); }

.right { width: 424px; padding-left: 4px; color: #5a5a5a; font-size: 14.500px; }
.panel { border: 2px solid #000; border-right: 0; background: #f4f4f4; }
.panel h2 { height: 34px; margin: -2px 0 0 -2px; background: #000; color: #fff; font-size: 17.500px; line-height: 38px; text-align: center; padding-left: 11px; }
.panel p b { color: #75a523; font-size: 14.200px; letter-spacing: -.3px; margin-left: 2px; }
.panel p .em { letter-spacing: -.15px; }
.panel p .mixed { letter-spacing: .05px; }
.p1 { height: 89px; border-top: 0; padding: 6px 0 0 18px; line-height: 19.700px; }
.p2 { height: 185px; margin-top: 10px; }
.rows { padding: 25px 0 0 18.500px; line-height: 19.500px; }
.panel p .meet { margin-left: 23px; }
.p3 { height: 224px; margin-top: 10px; }
.select { margin: 2px 0 0 5px; height: 20px; border: 1px solid #c4c4c4; border-right: 0; background: #fafafa; color: #111; font: 10px/16px "Open Sans", sans-serif; padding: 0 6px 1px 3px; display: flex; justify-content: space-between; align-items: center; }
.select i { border: 4px solid transparent; border-top: 5px solid #000; border-bottom: 0; }
.cmp { display: grid; grid-template-columns: 213px 213px; padding-top: 13px; }
.cmp > div { display: flex; flex-direction: column; align-items: center; }
.ah { font-weight: bold; font-size: 13.900px; line-height: 18px; color: #5f7aa5; }
.dt { font-size: 13.300px; line-height: 18px; margin-top: 4px; color: #7f84ab; }
.na2 { margin-top: 93px; font-size: 20px; line-height: 24px; color: #4a4a4a; transform: scaleX(.745); }
.cur { padding-left: 1px; }
.vbar { width: 23px; height: 60px; margin-top: 3px; background: #000; display: flex; align-items: flex-end; justify-content: center; }
.vbar i { width: 15px; background: #7dab20; }
.sc2 { font-size: 20px; line-height: 24px; color: #000; transform: scaleX(.73); }
.sc2 b { color: #7dab20; font-weight: 900; } .sc2 u { color: #555; }
.adv { color: #111; font-weight: bold; font-size: 12px; line-height: 15px; letter-spacing: -.45px; padding-left: 2px; }
.p4 { height: 171px; margin-top: 10px; }
.hrs { height: 113px; padding: 30px 0 0 0; display: grid; grid-template-columns: 139px 145px 140px; text-align: center; }
.hrs div { display: flex; flex-direction: column; align-items: center; font-weight: bold; font-size: 13.700px; line-height: 19px; color: #5b82b0; }
.hrs .hn { font-size: 21px; line-height: 36px; color: #e5a800; transform: translateX(2px) scaleX(.65); }
.hrs .blk { color: #000; }
.legend { margin-left: 4px; height: 20px; display: grid; grid-template-columns: 84px 84px 83px 84px 79px; text-align: center; color: #000; }
.legend span { display: flex; justify-content: center; }
.legend span:nth-child(1) { background: #c43624; }
.legend span:nth-child(2) { background: #ff4632; }
.legend span:nth-child(3) { background: #e5a800; }
.legend span:nth-child(4) { background: #7dab20; }
.legend span:nth-child(5) { background: #678d1c; }
.legend b { font-size: 17.500px; line-height: 20px; transform: scaleX(.66); word-spacing: 1.500px; }
.legend span:last-child b { transform: translateX(2px) scaleX(.68); }

.hscroll { height: 6px; background: #f5f5f5; padding-left: 18px; }
.hscroll div { width: 1537px; height: 6px; background: #e0e0e0; }
.tbar { height: 27px; background: #fafafa; display: grid; grid-template-columns: 72px 69px 78px 81px 728px 118px 70px 98px 73px 94px 90px; padding-left: 9px; font: 11.500px/16px "Open Sans", sans-serif; color: #666; }
.tbar div { display: flex; align-items: center; white-space: nowrap; letter-spacing: -.05px; }
.tbar svg { width: 16px; height: 16px; margin-right: 8px; fill: none; stroke: #666; stroke-width: 1.200; flex: none; }
.tbar .wide20 { width: 19px; }
.tbar .wide22 { width: 22px; margin-right: 6px; }
.tbar .dim { color: #b0b0b0; } .tbar .dim svg { stroke: #b0b0b0; }

/* taskbar */
.taskbar { position: absolute; left: 0; top: 860px; width: 1600px; height: 40px; background: linear-gradient(90deg, #20252a, #2d3133 50%, #2b2e31); display: grid; grid-template-columns: 47px 48px 49px 51px 49px 49px 48px 51px 48px 50px 45px 54px 60px 43px 52px 48px 1fr; }
.taskbar > div { display: flex; align-items: center; justify-content: center; position: relative; }
.taskbar > div > svg { width: 24px; height: 24px; }
.on::after { content: ""; position: absolute; left: 4px; right: 4px; bottom: 0; height: 2px; background: #76b9ed; }
.taskbar > .act { background: #53575a; margin: 0 3px; }
.act::after { left: 0; right: 0; }
.taskbar > .tray { justify-content: flex-end; color: #fff; }
.taskbar > .tray > svg { width: 110px; }
.clock { width: 76px; margin-left: 2px; display: flex; flex-direction: column; text-align: center; font: 11.600px/18px "Open Sans", sans-serif; letter-spacing: -.2px; }
.note { width: 40px; margin: 0 -3px 0 6px; position: relative; height: 20px; }
.note b { position: absolute; left: 5px; top: 8px; width: 20px; height: 18px; border: 1px solid #aaa; border-radius: 9px; background: #2b2e31; font: bold 11px/16px "Open Sans", sans-serif; text-align: center; }
.peek { width: 1px; height: 40px; background: #777; margin-right: 3px; }
```
